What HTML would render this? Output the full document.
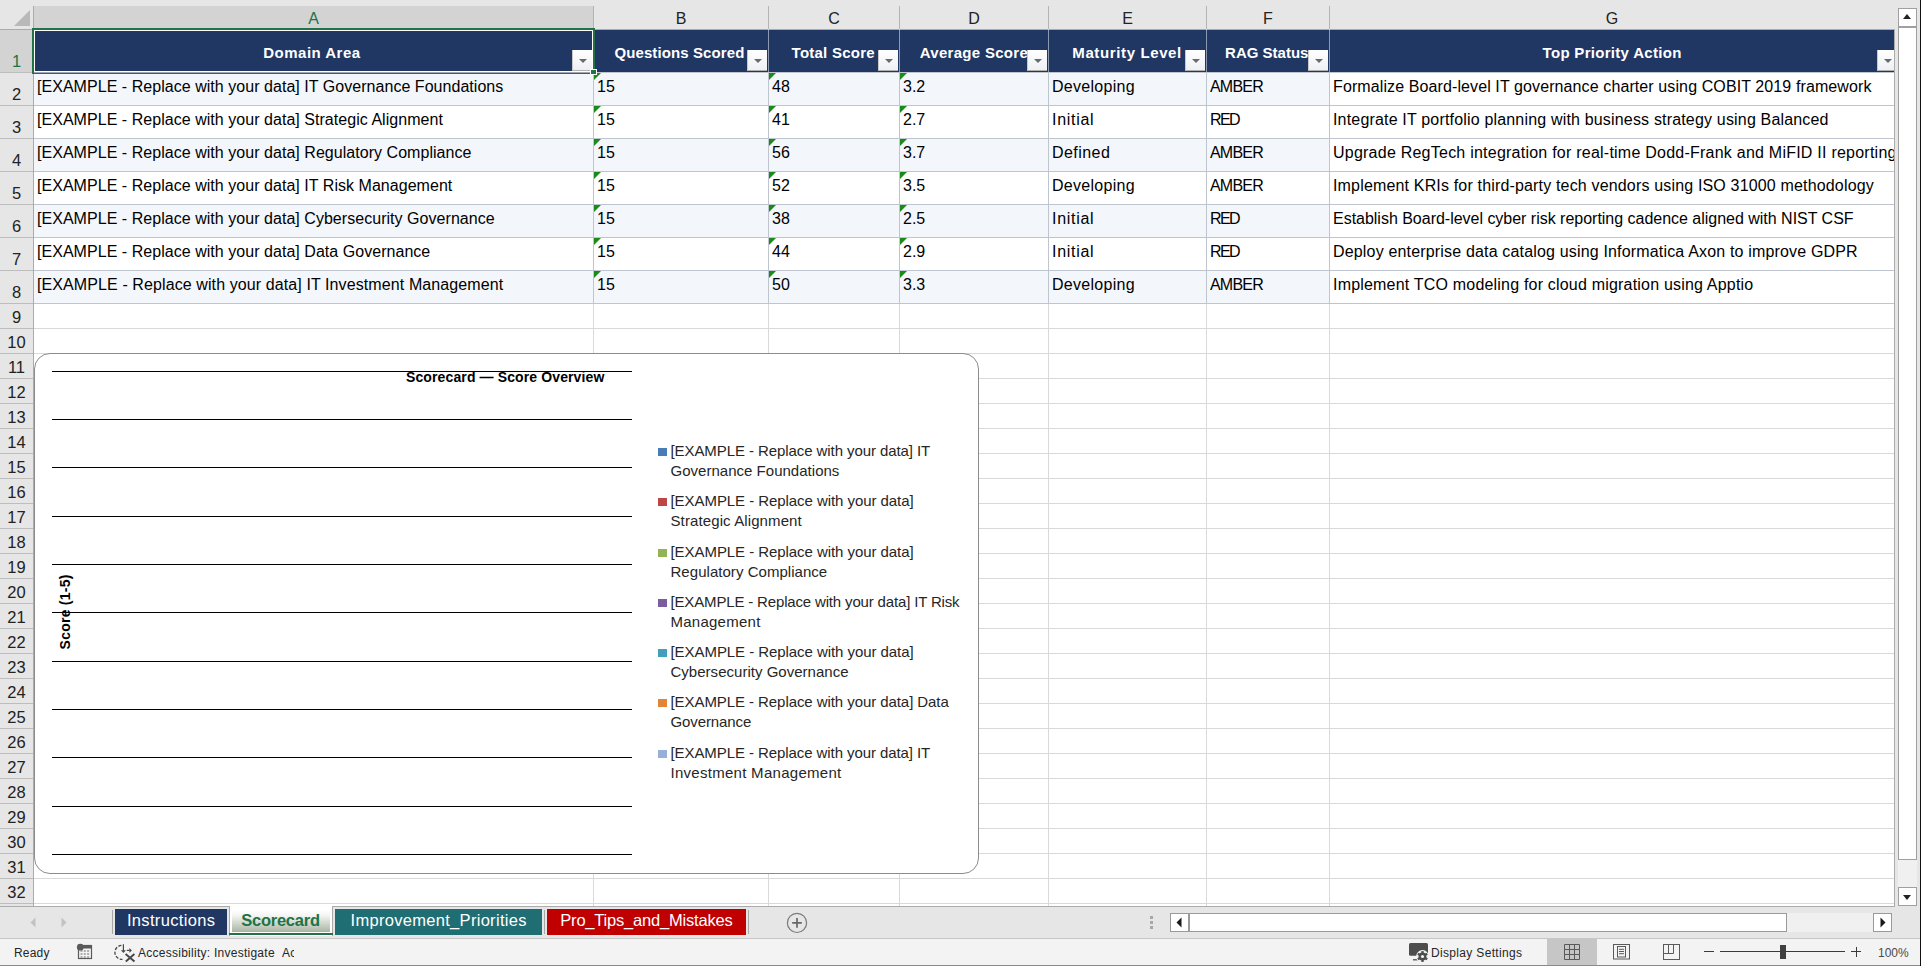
<!DOCTYPE html>
<html><head><meta charset="utf-8"><style>
*{box-sizing:border-box}
html,body{margin:0;padding:0}
body{width:1921px;height:966px;overflow:hidden;position:relative;background:#fff;font-family:"Liberation Sans",sans-serif;color:#000}
.a{position:absolute}
.hl{position:absolute;height:1px}
.vl{position:absolute;width:1px}
.t{position:absolute;white-space:nowrap;font-size:16px;letter-spacing:0.05px;line-height:18px}
.hd{position:absolute;white-space:nowrap;font-size:15px;font-weight:bold;color:#fff;letter-spacing:0.45px;line-height:18px;text-align:center}
.rn{position:absolute;left:0;width:33px;text-align:center;font-size:16.5px;color:#222;line-height:18px}
.cl{position:absolute;top:7px;height:23px;text-align:center;font-size:16px;color:#222;line-height:23px}
.dd{position:absolute;width:20px;height:21px;background:linear-gradient(#fff,#eef0f4);border-left:1px solid #c8c8c8;border-bottom:1px solid #b0b0b0}
.dd:after{content:"";position:absolute;left:6px;top:9px;border-left:4px solid transparent;border-right:4px solid transparent;border-top:4px solid #6a6a6a}
.gt{position:absolute;width:0;height:0;border-top:7px solid #1a8a1a;border-right:7px solid transparent}
.lg{position:absolute;left:670.5px;font-size:15px;line-height:20px;color:#262626;white-space:nowrap}
.sq{position:absolute;left:658px;width:9px;height:8px}
</style></head><body>

<div class="a" style="left:0;top:0;width:1921px;height:29px;background:#E6E6E6"></div>
<div class="a" style="left:14px;top:10px;width:0;height:0;border-left:16px solid transparent;border-bottom:16px solid #B9B9B9"></div>
<div class="a" style="left:33px;top:6px;width:560px;height:23px;background:#D3D3D3"></div>
<div class="a" style="left:0;top:29px;width:33px;height:877px;background:#E6E6E6"></div>
<div class="a" style="left:0;top:29px;width:33px;height:43px;background:#D3D3D3"></div>
<div class="vl" style="left:593px;top:6px;height:23px;background:#B4B4B4"></div>
<div class="vl" style="left:768px;top:6px;height:23px;background:#B4B4B4"></div>
<div class="vl" style="left:899px;top:6px;height:23px;background:#B4B4B4"></div>
<div class="vl" style="left:1048px;top:6px;height:23px;background:#B4B4B4"></div>
<div class="vl" style="left:1206px;top:6px;height:23px;background:#B4B4B4"></div>
<div class="vl" style="left:1329px;top:6px;height:23px;background:#B4B4B4"></div>
<div class="hl" style="left:0;top:29px;width:1894px;background:#ABABAB"></div>
<div class="vl" style="left:33px;top:6px;height:900px;background:#ABABAB"></div>
<div class="cl" style="left:34px;width:559px;color:#217346">A</div>
<div class="cl" style="left:594px;width:174px;color:#222">B</div>
<div class="cl" style="left:769px;width:130px;color:#222">C</div>
<div class="cl" style="left:900px;width:148px;color:#222">D</div>
<div class="cl" style="left:1049px;width:157px;color:#222">E</div>
<div class="cl" style="left:1207px;width:122px;color:#222">F</div>
<div class="cl" style="left:1330px;width:564px;color:#222">G</div>
<div class="hl" style="left:0;top:72px;width:33px;background:#BDBDBD"></div>
<div class="rn" style="top:52px;color:#217346">1</div>
<div class="hl" style="left:0;top:105px;width:33px;background:#BDBDBD"></div>
<div class="rn" style="top:85px;color:#222">2</div>
<div class="hl" style="left:0;top:138px;width:33px;background:#BDBDBD"></div>
<div class="rn" style="top:118px;color:#222">3</div>
<div class="hl" style="left:0;top:171px;width:33px;background:#BDBDBD"></div>
<div class="rn" style="top:151px;color:#222">4</div>
<div class="hl" style="left:0;top:204px;width:33px;background:#BDBDBD"></div>
<div class="rn" style="top:184px;color:#222">5</div>
<div class="hl" style="left:0;top:237px;width:33px;background:#BDBDBD"></div>
<div class="rn" style="top:217px;color:#222">6</div>
<div class="hl" style="left:0;top:270px;width:33px;background:#BDBDBD"></div>
<div class="rn" style="top:250px;color:#222">7</div>
<div class="hl" style="left:0;top:303px;width:33px;background:#BDBDBD"></div>
<div class="rn" style="top:283px;color:#222">8</div>
<div class="hl" style="left:0;top:328px;width:33px;background:#BDBDBD"></div>
<div class="rn" style="top:308px;color:#222">9</div>
<div class="hl" style="left:0;top:353px;width:33px;background:#BDBDBD"></div>
<div class="rn" style="top:333px;color:#222">10</div>
<div class="hl" style="left:0;top:378px;width:33px;background:#BDBDBD"></div>
<div class="rn" style="top:358px;color:#222">11</div>
<div class="hl" style="left:0;top:403px;width:33px;background:#BDBDBD"></div>
<div class="rn" style="top:383px;color:#222">12</div>
<div class="hl" style="left:0;top:428px;width:33px;background:#BDBDBD"></div>
<div class="rn" style="top:408px;color:#222">13</div>
<div class="hl" style="left:0;top:453px;width:33px;background:#BDBDBD"></div>
<div class="rn" style="top:433px;color:#222">14</div>
<div class="hl" style="left:0;top:478px;width:33px;background:#BDBDBD"></div>
<div class="rn" style="top:458px;color:#222">15</div>
<div class="hl" style="left:0;top:503px;width:33px;background:#BDBDBD"></div>
<div class="rn" style="top:483px;color:#222">16</div>
<div class="hl" style="left:0;top:528px;width:33px;background:#BDBDBD"></div>
<div class="rn" style="top:508px;color:#222">17</div>
<div class="hl" style="left:0;top:553px;width:33px;background:#BDBDBD"></div>
<div class="rn" style="top:533px;color:#222">18</div>
<div class="hl" style="left:0;top:578px;width:33px;background:#BDBDBD"></div>
<div class="rn" style="top:558px;color:#222">19</div>
<div class="hl" style="left:0;top:603px;width:33px;background:#BDBDBD"></div>
<div class="rn" style="top:583px;color:#222">20</div>
<div class="hl" style="left:0;top:628px;width:33px;background:#BDBDBD"></div>
<div class="rn" style="top:608px;color:#222">21</div>
<div class="hl" style="left:0;top:653px;width:33px;background:#BDBDBD"></div>
<div class="rn" style="top:633px;color:#222">22</div>
<div class="hl" style="left:0;top:678px;width:33px;background:#BDBDBD"></div>
<div class="rn" style="top:658px;color:#222">23</div>
<div class="hl" style="left:0;top:703px;width:33px;background:#BDBDBD"></div>
<div class="rn" style="top:683px;color:#222">24</div>
<div class="hl" style="left:0;top:728px;width:33px;background:#BDBDBD"></div>
<div class="rn" style="top:708px;color:#222">25</div>
<div class="hl" style="left:0;top:753px;width:33px;background:#BDBDBD"></div>
<div class="rn" style="top:733px;color:#222">26</div>
<div class="hl" style="left:0;top:778px;width:33px;background:#BDBDBD"></div>
<div class="rn" style="top:758px;color:#222">27</div>
<div class="hl" style="left:0;top:803px;width:33px;background:#BDBDBD"></div>
<div class="rn" style="top:783px;color:#222">28</div>
<div class="hl" style="left:0;top:828px;width:33px;background:#BDBDBD"></div>
<div class="rn" style="top:808px;color:#222">29</div>
<div class="hl" style="left:0;top:853px;width:33px;background:#BDBDBD"></div>
<div class="rn" style="top:833px;color:#222">30</div>
<div class="hl" style="left:0;top:878px;width:33px;background:#BDBDBD"></div>
<div class="rn" style="top:858px;color:#222">31</div>
<div class="hl" style="left:0;top:903px;width:33px;background:#BDBDBD"></div>
<div class="rn" style="top:883px;color:#222">32</div>
<div class="hl" style="left:34px;top:105px;width:1860px;background:#D9D9D9"></div>
<div class="hl" style="left:34px;top:138px;width:1860px;background:#D9D9D9"></div>
<div class="hl" style="left:34px;top:171px;width:1860px;background:#D9D9D9"></div>
<div class="hl" style="left:34px;top:204px;width:1860px;background:#D9D9D9"></div>
<div class="hl" style="left:34px;top:237px;width:1860px;background:#D9D9D9"></div>
<div class="hl" style="left:34px;top:270px;width:1860px;background:#D9D9D9"></div>
<div class="hl" style="left:34px;top:303px;width:1860px;background:#D9D9D9"></div>
<div class="hl" style="left:34px;top:328px;width:1860px;background:#D9D9D9"></div>
<div class="hl" style="left:34px;top:353px;width:1860px;background:#D9D9D9"></div>
<div class="hl" style="left:34px;top:378px;width:1860px;background:#D9D9D9"></div>
<div class="hl" style="left:34px;top:403px;width:1860px;background:#D9D9D9"></div>
<div class="hl" style="left:34px;top:428px;width:1860px;background:#D9D9D9"></div>
<div class="hl" style="left:34px;top:453px;width:1860px;background:#D9D9D9"></div>
<div class="hl" style="left:34px;top:478px;width:1860px;background:#D9D9D9"></div>
<div class="hl" style="left:34px;top:503px;width:1860px;background:#D9D9D9"></div>
<div class="hl" style="left:34px;top:528px;width:1860px;background:#D9D9D9"></div>
<div class="hl" style="left:34px;top:553px;width:1860px;background:#D9D9D9"></div>
<div class="hl" style="left:34px;top:578px;width:1860px;background:#D9D9D9"></div>
<div class="hl" style="left:34px;top:603px;width:1860px;background:#D9D9D9"></div>
<div class="hl" style="left:34px;top:628px;width:1860px;background:#D9D9D9"></div>
<div class="hl" style="left:34px;top:653px;width:1860px;background:#D9D9D9"></div>
<div class="hl" style="left:34px;top:678px;width:1860px;background:#D9D9D9"></div>
<div class="hl" style="left:34px;top:703px;width:1860px;background:#D9D9D9"></div>
<div class="hl" style="left:34px;top:728px;width:1860px;background:#D9D9D9"></div>
<div class="hl" style="left:34px;top:753px;width:1860px;background:#D9D9D9"></div>
<div class="hl" style="left:34px;top:778px;width:1860px;background:#D9D9D9"></div>
<div class="hl" style="left:34px;top:803px;width:1860px;background:#D9D9D9"></div>
<div class="hl" style="left:34px;top:828px;width:1860px;background:#D9D9D9"></div>
<div class="hl" style="left:34px;top:853px;width:1860px;background:#D9D9D9"></div>
<div class="hl" style="left:34px;top:878px;width:1860px;background:#D9D9D9"></div>
<div class="hl" style="left:34px;top:903px;width:1860px;background:#D9D9D9"></div>
<div class="vl" style="left:593px;top:29px;height:877px;background:#D9D9D9"></div>
<div class="vl" style="left:768px;top:29px;height:877px;background:#D9D9D9"></div>
<div class="vl" style="left:899px;top:29px;height:877px;background:#D9D9D9"></div>
<div class="vl" style="left:1048px;top:29px;height:877px;background:#D9D9D9"></div>
<div class="vl" style="left:1206px;top:29px;height:877px;background:#D9D9D9"></div>
<div class="vl" style="left:1329px;top:29px;height:877px;background:#D9D9D9"></div>
<div class="vl" style="left:1894px;top:29px;height:877px;background:#D9D9D9"></div>
<div class="a" style="left:34px;top:30px;width:1860px;height:42px;background:#203764"></div>
<div class="vl" style="left:593px;top:30px;height:42px;background:#8a98b0"></div>
<div class="vl" style="left:768px;top:30px;height:42px;background:#8a98b0"></div>
<div class="vl" style="left:899px;top:30px;height:42px;background:#8a98b0"></div>
<div class="vl" style="left:1048px;top:30px;height:42px;background:#8a98b0"></div>
<div class="vl" style="left:1206px;top:30px;height:42px;background:#8a98b0"></div>
<div class="vl" style="left:1329px;top:30px;height:42px;background:#8a98b0"></div>
<div class="a" style="left:34px;top:73px;width:1295px;height:32px;background:#F3F6FB"></div>
<div class="a" style="left:34px;top:139px;width:1295px;height:32px;background:#F3F6FB"></div>
<div class="a" style="left:34px;top:205px;width:1295px;height:32px;background:#F3F6FB"></div>
<div class="a" style="left:34px;top:271px;width:1295px;height:32px;background:#F3F6FB"></div>
<div class="hl" style="left:34px;top:72px;width:1860px;background:#BFC5CE"></div>
<div class="hl" style="left:34px;top:105px;width:1860px;background:#BFC5CE"></div>
<div class="hl" style="left:34px;top:138px;width:1860px;background:#BFC5CE"></div>
<div class="hl" style="left:34px;top:171px;width:1860px;background:#BFC5CE"></div>
<div class="hl" style="left:34px;top:204px;width:1860px;background:#BFC5CE"></div>
<div class="hl" style="left:34px;top:237px;width:1860px;background:#BFC5CE"></div>
<div class="hl" style="left:34px;top:270px;width:1860px;background:#BFC5CE"></div>
<div class="hl" style="left:34px;top:303px;width:1860px;background:#BFC5CE"></div>
<div class="vl" style="left:593px;top:72px;height:232px;background:#BFC5CE"></div>
<div class="vl" style="left:768px;top:72px;height:232px;background:#BFC5CE"></div>
<div class="vl" style="left:899px;top:72px;height:232px;background:#BFC5CE"></div>
<div class="vl" style="left:1048px;top:72px;height:232px;background:#BFC5CE"></div>
<div class="vl" style="left:1206px;top:72px;height:232px;background:#BFC5CE"></div>
<div class="vl" style="left:1329px;top:72px;height:232px;background:#BFC5CE"></div>
<div class="vl" style="left:1894px;top:72px;height:232px;background:#BFC5CE"></div>
<div class="hd" style="left:263.3px;top:44px;letter-spacing:0.48px;text-align:left">Domain Area</div>
<div class="dd" style="left:572px;top:50px"></div>
<div class="hd" style="left:614.4px;top:44px;letter-spacing:0.11px;text-align:left">Questions Scored</div>
<div class="dd" style="left:747px;top:50px"></div>
<div class="hd" style="left:791.6px;top:44px;letter-spacing:0.24px;text-align:left">Total Score</div>
<div class="dd" style="left:878px;top:50px"></div>
<div class="hd" style="left:919.7px;top:44px;letter-spacing:0.3px;text-align:left">Average Score</div>
<div class="dd" style="left:1027px;top:50px"></div>
<div class="hd" style="left:1072.3px;top:44px;letter-spacing:0.62px;text-align:left">Maturity Level</div>
<div class="dd" style="left:1185px;top:50px"></div>
<div class="hd" style="left:1225.1px;top:44px;letter-spacing:0.0px;text-align:left">RAG Status</div>
<div class="dd" style="left:1308px;top:50px"></div>
<div class="hd" style="left:1542.6px;top:44px;letter-spacing:0.3px;text-align:left">Top Priority Action</div>
<div class="dd" style="left:1877px;width:17px;top:50px"></div>
<div class="t" style="left:37px;top:77.5px;width:556px;overflow:hidden;letter-spacing:0.04px">[EXAMPLE - Replace with your data] IT Governance Foundations</div>
<div class="t" style="left:597px;top:77.5px;width:171px;overflow:hidden;letter-spacing:0px">15</div>
<div class="gt" style="left:594px;top:73px"></div>
<div class="t" style="left:772px;top:77.5px;width:127px;overflow:hidden;letter-spacing:0px">48</div>
<div class="gt" style="left:769px;top:73px"></div>
<div class="t" style="left:903px;top:77.5px;width:145px;overflow:hidden;letter-spacing:0px">3.2</div>
<div class="gt" style="left:900px;top:73px"></div>
<div class="t" style="left:1052px;top:77.5px;width:154px;overflow:hidden;letter-spacing:0.28px">Developing</div>
<div class="t" style="left:1210px;top:77.5px;width:119px;overflow:hidden;letter-spacing:-0.8px">AMBER</div>
<div class="t" style="left:1333px;top:77.5px;width:561px;overflow:hidden;letter-spacing:0.105px">Formalize Board-level IT governance charter using COBIT 2019 framework</div>
<div class="t" style="left:37px;top:110.5px;width:556px;overflow:hidden;letter-spacing:0.04px">[EXAMPLE - Replace with your data] Strategic Alignment</div>
<div class="t" style="left:597px;top:110.5px;width:171px;overflow:hidden;letter-spacing:0px">15</div>
<div class="gt" style="left:594px;top:106px"></div>
<div class="t" style="left:772px;top:110.5px;width:127px;overflow:hidden;letter-spacing:0px">41</div>
<div class="gt" style="left:769px;top:106px"></div>
<div class="t" style="left:903px;top:110.5px;width:145px;overflow:hidden;letter-spacing:0px">2.7</div>
<div class="gt" style="left:900px;top:106px"></div>
<div class="t" style="left:1052px;top:110.5px;width:154px;overflow:hidden;letter-spacing:0.7px">Initial</div>
<div class="t" style="left:1210px;top:110.5px;width:119px;overflow:hidden;letter-spacing:-1.6px">RED</div>
<div class="t" style="left:1333px;top:110.5px;width:561px;overflow:hidden;letter-spacing:0.176px">Integrate IT portfolio planning with business strategy using Balanced</div>
<div class="t" style="left:37px;top:143.5px;width:556px;overflow:hidden;letter-spacing:0.04px">[EXAMPLE - Replace with your data] Regulatory Compliance</div>
<div class="t" style="left:597px;top:143.5px;width:171px;overflow:hidden;letter-spacing:0px">15</div>
<div class="gt" style="left:594px;top:139px"></div>
<div class="t" style="left:772px;top:143.5px;width:127px;overflow:hidden;letter-spacing:0px">56</div>
<div class="gt" style="left:769px;top:139px"></div>
<div class="t" style="left:903px;top:143.5px;width:145px;overflow:hidden;letter-spacing:0px">3.7</div>
<div class="gt" style="left:900px;top:139px"></div>
<div class="t" style="left:1052px;top:143.5px;width:154px;overflow:hidden;letter-spacing:0.45px">Defined</div>
<div class="t" style="left:1210px;top:143.5px;width:119px;overflow:hidden;letter-spacing:-0.8px">AMBER</div>
<div class="t" style="left:1333px;top:143.5px;width:561px;overflow:hidden;letter-spacing:0.235px">Upgrade RegTech integration for real-time Dodd-Frank and MiFID II reporting</div>
<div class="t" style="left:37px;top:176.5px;width:556px;overflow:hidden;letter-spacing:0.04px">[EXAMPLE - Replace with your data] IT Risk Management</div>
<div class="t" style="left:597px;top:176.5px;width:171px;overflow:hidden;letter-spacing:0px">15</div>
<div class="gt" style="left:594px;top:172px"></div>
<div class="t" style="left:772px;top:176.5px;width:127px;overflow:hidden;letter-spacing:0px">52</div>
<div class="gt" style="left:769px;top:172px"></div>
<div class="t" style="left:903px;top:176.5px;width:145px;overflow:hidden;letter-spacing:0px">3.5</div>
<div class="gt" style="left:900px;top:172px"></div>
<div class="t" style="left:1052px;top:176.5px;width:154px;overflow:hidden;letter-spacing:0.28px">Developing</div>
<div class="t" style="left:1210px;top:176.5px;width:119px;overflow:hidden;letter-spacing:-0.8px">AMBER</div>
<div class="t" style="left:1333px;top:176.5px;width:561px;overflow:hidden;letter-spacing:0.166px">Implement KRIs for third-party tech vendors using ISO 31000 methodology</div>
<div class="t" style="left:37px;top:209.5px;width:556px;overflow:hidden;letter-spacing:0.04px">[EXAMPLE - Replace with your data] Cybersecurity Governance</div>
<div class="t" style="left:597px;top:209.5px;width:171px;overflow:hidden;letter-spacing:0px">15</div>
<div class="gt" style="left:594px;top:205px"></div>
<div class="t" style="left:772px;top:209.5px;width:127px;overflow:hidden;letter-spacing:0px">38</div>
<div class="gt" style="left:769px;top:205px"></div>
<div class="t" style="left:903px;top:209.5px;width:145px;overflow:hidden;letter-spacing:0px">2.5</div>
<div class="gt" style="left:900px;top:205px"></div>
<div class="t" style="left:1052px;top:209.5px;width:154px;overflow:hidden;letter-spacing:0.7px">Initial</div>
<div class="t" style="left:1210px;top:209.5px;width:119px;overflow:hidden;letter-spacing:-1.6px">RED</div>
<div class="t" style="left:1333px;top:209.5px;width:561px;overflow:hidden;letter-spacing:-0.016px">Establish Board-level cyber risk reporting cadence aligned with NIST CSF</div>
<div class="t" style="left:37px;top:242.5px;width:556px;overflow:hidden;letter-spacing:0.04px">[EXAMPLE - Replace with your data] Data Governance</div>
<div class="t" style="left:597px;top:242.5px;width:171px;overflow:hidden;letter-spacing:0px">15</div>
<div class="gt" style="left:594px;top:238px"></div>
<div class="t" style="left:772px;top:242.5px;width:127px;overflow:hidden;letter-spacing:0px">44</div>
<div class="gt" style="left:769px;top:238px"></div>
<div class="t" style="left:903px;top:242.5px;width:145px;overflow:hidden;letter-spacing:0px">2.9</div>
<div class="gt" style="left:900px;top:238px"></div>
<div class="t" style="left:1052px;top:242.5px;width:154px;overflow:hidden;letter-spacing:0.7px">Initial</div>
<div class="t" style="left:1210px;top:242.5px;width:119px;overflow:hidden;letter-spacing:-1.6px">RED</div>
<div class="t" style="left:1333px;top:242.5px;width:561px;overflow:hidden;letter-spacing:0.169px">Deploy enterprise data catalog using Informatica Axon to improve GDPR</div>
<div class="t" style="left:37px;top:275.5px;width:556px;overflow:hidden;letter-spacing:0.1px">[EXAMPLE - Replace with your data] IT Investment Management</div>
<div class="t" style="left:597px;top:275.5px;width:171px;overflow:hidden;letter-spacing:0px">15</div>
<div class="gt" style="left:594px;top:271px"></div>
<div class="t" style="left:772px;top:275.5px;width:127px;overflow:hidden;letter-spacing:0px">50</div>
<div class="gt" style="left:769px;top:271px"></div>
<div class="t" style="left:903px;top:275.5px;width:145px;overflow:hidden;letter-spacing:0px">3.3</div>
<div class="gt" style="left:900px;top:271px"></div>
<div class="t" style="left:1052px;top:275.5px;width:154px;overflow:hidden;letter-spacing:0.28px">Developing</div>
<div class="t" style="left:1210px;top:275.5px;width:119px;overflow:hidden;letter-spacing:-0.8px">AMBER</div>
<div class="t" style="left:1333px;top:275.5px;width:561px;overflow:hidden;letter-spacing:0.195px">Implement TCO modeling for cloud migration using Apptio</div>
<div class="a" style="left:32px;top:28px;width:563px;height:46px;border:2px solid #217346"></div>
<div class="a" style="left:34px;top:30px;width:559px;height:42px;border:1px solid #fff"></div>
<div class="hl" style="left:34px;top:72px;width:557px;background:#9FA6AE"></div>
<div class="a" style="left:590px;top:69px;width:7px;height:6px;background:#217346;border:1px solid #fff"></div>
<div class="a" style="left:34px;top:353px;width:945px;height:521px;background:#fff;border:1px solid #8C8C8C;border-radius:16px"></div>
<div class="hl" style="left:52px;top:371px;width:580px;background:#000"></div>
<div class="hl" style="left:52px;top:419px;width:580px;background:#000"></div>
<div class="hl" style="left:52px;top:467px;width:580px;background:#000"></div>
<div class="hl" style="left:52px;top:516px;width:580px;background:#000"></div>
<div class="hl" style="left:52px;top:564px;width:580px;background:#000"></div>
<div class="hl" style="left:52px;top:612px;width:580px;background:#000"></div>
<div class="hl" style="left:52px;top:661px;width:580px;background:#000"></div>
<div class="hl" style="left:52px;top:709px;width:580px;background:#000"></div>
<div class="hl" style="left:52px;top:757px;width:580px;background:#000"></div>
<div class="hl" style="left:52px;top:806px;width:580px;background:#000"></div>
<div class="hl" style="left:52px;top:854px;width:580px;background:#000"></div>
<div class="a" style="left:406px;top:369px;font-size:14px;font-weight:bold;white-space:nowrap;line-height:16px;letter-spacing:0.12px">Scorecard — Score Overview</div>
<div class="a" style="left:25px;top:604px;width:80px;font-size:14px;font-weight:bold;white-space:nowrap;line-height:16px;transform:rotate(-90deg);transform-origin:center;text-align:center;letter-spacing:0.25px;text-indent:0.25px">Score (1-5)</div>
<div class="sq" style="top:448px;background:#4A7CB8"></div>
<div class="lg" style="top:441px;letter-spacing:-0.08px">[EXAMPLE - Replace with your data] IT</div>
<div class="lg" style="top:461.2px;letter-spacing:0.02px">Governance Foundations</div>
<div class="sq" style="top:498px;background:#BC4745"></div>
<div class="lg" style="top:491px;letter-spacing:-0.06px">[EXAMPLE - Replace with your data]</div>
<div class="lg" style="top:511.2px;letter-spacing:0.11px">Strategic Alignment</div>
<div class="sq" style="top:549px;background:#92B356"></div>
<div class="lg" style="top:542px;letter-spacing:-0.06px">[EXAMPLE - Replace with your data]</div>
<div class="lg" style="top:562.2px;letter-spacing:0.04px">Regulatory Compliance</div>
<div class="sq" style="top:599px;background:#7A5E9E"></div>
<div class="lg" style="top:592px;letter-spacing:-0.16px">[EXAMPLE - Replace with your data] IT Risk</div>
<div class="lg" style="top:612.2px;letter-spacing:0.25px">Management</div>
<div class="sq" style="top:649px;background:#43A0BC"></div>
<div class="lg" style="top:642px;letter-spacing:-0.06px">[EXAMPLE - Replace with your data]</div>
<div class="lg" style="top:662.2px;letter-spacing:0.02px">Cybersecurity Governance</div>
<div class="sq" style="top:699px;background:#E38537"></div>
<div class="lg" style="top:692px;letter-spacing:-0.07px">[EXAMPLE - Replace with your data] Data</div>
<div class="lg" style="top:712.2px;letter-spacing:-0.1px">Governance</div>
<div class="sq" style="top:750px;background:#98B0D8"></div>
<div class="lg" style="top:743px;letter-spacing:-0.08px">[EXAMPLE - Replace with your data] IT</div>
<div class="lg" style="top:763.2px;letter-spacing:0.28px">Investment Management</div>
<div class="hl" style="left:0;top:906px;width:1895px;background:#ABABAB"></div>
<div class="a" style="left:1895px;top:0;width:26px;height:907px;background:#E6E6E6"></div>
<div class="vl" style="left:1894px;top:29px;height:878px;background:#ABABAB"></div>
<div class="a" style="left:1898px;top:8px;width:19px;height:19px;background:#fff;border:1px solid #A0A0A0"></div>
<div class="a" style="left:1903px;top:14px;width:0;height:0;border-left:4.5px solid transparent;border-right:4.5px solid transparent;border-bottom:5px solid #222"></div>
<div class="a" style="left:1898px;top:27px;width:19px;height:833px;background:#fff;border:1px solid #A0A0A0"></div>
<div class="a" style="left:1898px;top:860px;width:19px;height:27px;background:#F0F0F0"></div>
<div class="a" style="left:1898px;top:887px;width:19px;height:19px;background:#fff;border:1px solid #A0A0A0"></div>
<div class="a" style="left:1903px;top:895px;width:0;height:0;border-left:4.5px solid transparent;border-right:4.5px solid transparent;border-top:5px solid #222"></div>
<div class="vl" style="left:1920px;top:0;height:966px;background:#111"></div>
<div class="a" style="left:0;top:907px;width:1920px;height:31px;background:#E6E6E6"></div>
<div class="hl" style="left:0;top:938px;width:1920px;background:#C6C6C6"></div>
<svg class="a" style="left:26px;top:914px" width="48" height="16" viewBox="0 0 48 16"><path d="M9.5 3.5 L4.5 8.5 L9.5 13.5 Z" fill="#C2C2C2"/><path d="M35.5 3.5 L40.5 8.5 L35.5 13.5 Z" fill="#C2C2C2"/></svg>
<div class="vl" style="left:112px;top:910px;height:24px;background:#A6A6A6"></div>
<div class="a" style="left:115px;top:909px;width:112px;height:26px;background:#203764"></div>
<div class="a" style="left:115px;top:910px;width:112px;color:#fff;font-size:16.5px;line-height:20px;text-align:center;white-space:nowrap;letter-spacing:0.35px;text-indent:0.35px">Instructions</div>
<div class="a" style="left:335px;top:909px;width:207px;height:26px;background:#1F6E73"></div>
<div class="a" style="left:335px;top:910px;width:207px;color:#fff;font-size:16.5px;line-height:20px;text-align:center;white-space:nowrap;letter-spacing:0.3px;text-indent:0.3px">Improvement_Priorities</div>
<div class="a" style="left:547px;top:909px;width:199px;height:26px;background:#C00000"></div>
<div class="a" style="left:547px;top:910px;width:199px;color:#fff;font-size:16.5px;line-height:20px;text-align:center;white-space:nowrap;letter-spacing:-0.2px;text-indent:-0.2px">Pro_Tips_and_Mistakes</div>
<div class="a" style="left:229px;top:906px;width:104px;height:30px;background:#fff;border:1px solid #A8A8A8;border-top:0;border-bottom:0"></div>
<div class="a" style="left:232px;top:910px;width:98px;height:22px;background:linear-gradient(#fff 0%,#f3f5f2 25%,#a9b5a3 100%)"></div>
<div class="a" style="left:229px;top:933px;width:104px;height:2px;background:#217346"></div>
<div class="a" style="left:228px;top:910px;width:105px;color:#217346;font-weight:bold;font-size:16.5px;line-height:20px;text-align:center;letter-spacing:-0.25px;white-space:nowrap">Scorecard</div>
<div class="vl" style="left:544px;top:910px;height:24px;background:#A6A6A6"></div>
<div class="vl" style="left:748px;top:910px;height:24px;background:#A6A6A6"></div>
<svg class="a" style="left:785px;top:911px" width="24" height="24" viewBox="0 0 24 24"><circle cx="12" cy="11.9" r="9.6" fill="none" stroke="#7a7a7a" stroke-width="1.2"/><path d="M7.2 11.9 H16.8 M12 7.1 V16.7" stroke="#666" stroke-width="1.7"/></svg>
<div class="a" style="left:1150px;top:916px;width:3px;height:3px;background:#A8A8A8"></div>
<div class="a" style="left:1150px;top:921px;width:3px;height:3px;background:#A8A8A8"></div>
<div class="a" style="left:1150px;top:926px;width:3px;height:3px;background:#A8A8A8"></div>
<div class="a" style="left:1170px;top:913px;width:722px;height:19px;background:#F0F0F0"></div>
<div class="a" style="left:1170px;top:913px;width:19px;height:19px;background:#fff;border:1px solid #9A9A9A"></div>
<svg class="a" style="left:1170px;top:913px" width="19" height="19" viewBox="0 0 19 19"><path d="M11.5 4.5 L6.5 9.5 L11.5 14.5 Z" fill="#1a1a1a"/></svg>
<div class="a" style="left:1189px;top:913px;width:598px;height:19px;background:#fff;border:1px solid #9A9A9A"></div>
<div class="a" style="left:1873px;top:913px;width:19px;height:19px;background:#fff;border:1px solid #9A9A9A"></div>
<svg class="a" style="left:1873px;top:913px" width="19" height="19" viewBox="0 0 19 19"><path d="M7.5 4.5 L12.5 9.5 L7.5 14.5 Z" fill="#1a1a1a"/></svg>
<div class="a" style="left:0;top:939px;width:1920px;height:26px;background:#F3F3F3"></div>
<div class="hl" style="left:0;top:965px;width:1920px;background:#8A8A8A"></div>
<div style="position:absolute;font-size:12px;color:#262626;line-height:14px;white-space:nowrap;top:945.5px;left:14px;letter-spacing:0.2px">Ready</div>
<svg class="a" style="left:74px;top:941px" width="22" height="22" viewBox="0 0 22 22"><rect x="4.5" y="4.5" width="13" height="13" fill="none" stroke="#5a5a5a" stroke-width="1.2"/><rect x="4" y="4" width="14" height="3.5" fill="#5a5a5a"/><circle cx="6.3" cy="6.2" r="3.4" fill="#5a5a5a"/><path d="M6.5 10 H16 M6.5 13 H16 M6.5 16 H16" stroke="#6a6a6a" stroke-width="1" stroke-dasharray="2 1.3"/></svg>
<svg class="a" style="left:110px;top:940px" width="30" height="24" viewBox="0 0 30 24"><path d="M11.4 5.4 A7 7 0 0 0 12.5 19.4" fill="none" stroke="#474747" stroke-width="1.3" stroke-dasharray="3.2 1.6"/><path d="M13.4 4.3 V11" stroke="#474747" stroke-width="1.2"/><path d="M11 10.3 H15.9 L13.4 12.9 Z" fill="#474747"/><path d="M16.8 10.4 H19.5" stroke="#474747" stroke-width="1.2"/><path d="M19.4 8 L21.9 10.4 L19.4 12.8 Z" fill="#474747"/><path d="M15.6 14 L24.5 21.5 M15.8 21.5 L24.4 14" stroke="#474747" stroke-width="1.9"/></svg>
<div style="position:absolute;font-size:12px;color:#262626;line-height:14px;white-space:nowrap;top:945.5px;left:138px;letter-spacing:0.26px">Accessibility: Investigate&nbsp;&nbsp;<span style="display:inline-block;width:12px;overflow:hidden;vertical-align:top">Ac</span></div>
<svg class="a" style="left:1404px;top:940px" width="28" height="24" viewBox="0 0 28 24"><rect x="5" y="3" width="19" height="12.8" rx="1.6" fill="#4d4d4d"/><path d="M9 19.8 H13.5" stroke="#4d4d4d" stroke-width="1.3"/><circle cx="18.5" cy="16.5" r="6.4" fill="#F3F3F3"/><g transform="translate(18.5 16.5)" fill="#4d4d4d"><circle r="3.9"/><rect x="-1.2" y="-5.4" width="2.4" height="10.8"/><rect x="-1.2" y="-5.4" width="2.4" height="10.8" transform="rotate(60)"/><rect x="-1.2" y="-5.4" width="2.4" height="10.8" transform="rotate(120)"/><circle r="1.6" fill="#F3F3F3"/></g></svg>
<div style="position:absolute;font-size:12px;color:#262626;line-height:14px;white-space:nowrap;top:945.5px;left:1431px;letter-spacing:0.33px">Display Settings</div>
<div class="a" style="left:1547px;top:939px;width:50px;height:26px;background:#C6C6C6"></div>
<svg class="a" style="left:1564px;top:944px" width="16" height="16" viewBox="0 0 16 16"><path d="M0.5 0.5 H15.5 V15.5 H0.5 Z M5.5 0.5 V15.5 M10.5 0.5 V15.5 M0.5 5.5 H15.5 M0.5 10.5 H15.5" fill="none" stroke="#5a5a5a" stroke-width="1"/></svg>
<svg class="a" style="left:1613px;top:944px" width="17" height="16" viewBox="0 0 17 16"><rect x="0.5" y="0.5" width="16" height="14.5" fill="none" stroke="#5a5a5a"/><rect x="4.5" y="2.5" width="8" height="10.5" fill="none" stroke="#5a5a5a"/><path d="M6 5.3 H11 M6 7.5 H11 M6 9.7 H11" stroke="#5a5a5a"/></svg>
<svg class="a" style="left:1663px;top:944px" width="17" height="16" viewBox="0 0 17 16"><rect x="0.5" y="0.5" width="16" height="15" fill="none" stroke="#5a5a5a"/><path d="M0.5 9.5 H10.5 V0.5 M5.5 0.5 V9.5" fill="none" stroke="#5a5a5a"/></svg>
<div class="a" style="left:1704px;top:951px;width:10px;height:1.2px;background:#3a3a3a"></div>
<div class="a" style="left:1720px;top:951px;width:125px;height:1.2px;background:#3a3a3a"></div>
<div class="a" style="left:1780px;top:945px;width:6px;height:14px;background:#404040"></div>
<div class="a" style="left:1851px;top:951px;width:10px;height:1px;background:#3a3a3a"></div>
<div class="a" style="left:1856px;top:946.5px;width:1px;height:10px;background:#3a3a3a"></div>
<div style="position:absolute;font-size:12px;color:#262626;line-height:14px;white-space:nowrap;top:945.5px;left:1878px;letter-spacing:0px;color:#4a4a4a">100%</div>
</body></html>
